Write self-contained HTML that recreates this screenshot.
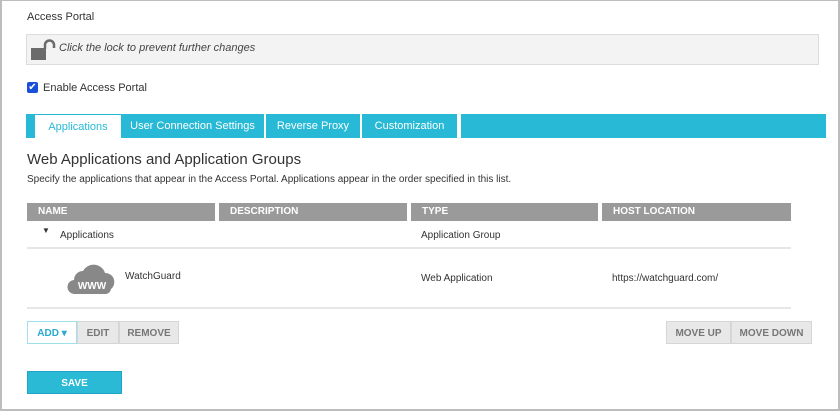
<!DOCTYPE html>
<html><head><style>
body{margin:0;width:840px;height:412px;font-family:"Liberation Sans",sans-serif;color:#333;background:#fff;position:relative;overflow:hidden}
.frame{position:absolute;left:0;top:0;width:836px;height:408px;border:2px solid #bdbdbd;border-top-width:1px}
.a{position:absolute}
.t{font-size:11px;white-space:nowrap}
.tab{position:absolute;top:114px;height:24px;line-height:24px;color:#fff;font-size:11px;text-align:center;border-right:2px solid #fff}
.th{position:absolute;top:203px;height:18px;line-height:18px;background:#9a9a9a;color:#fff;font-weight:bold;font-size:10px;padding-left:11px;box-sizing:border-box;border-right:2px solid #fff}
.btn{position:absolute;top:321px;height:23px;line-height:23px;font-size:10px;font-weight:bold;color:#777;background:#e8e8e8;border:1px solid #d6d6d6;box-sizing:border-box;text-align:center}
</style></head><body>
<div class="frame"></div>
<div class="a t" style="left:27px;top:11px">Access Portal</div>
<div class="a" style="left:26px;top:34px;width:793px;height:31px;background:#f3f3f3;border:1px solid #dcdcdc;box-sizing:border-box"></div>
<svg class="a" style="left:30px;top:39px" width="26" height="22" viewBox="0 0 26 22"><rect x="1" y="9" width="15" height="12" fill="#6b6b6b"/><path d="M15 10V6a4.5 4.5 0 0 1 9 0v3" fill="none" stroke="#6b6b6b" stroke-width="2.5"/></svg>
<div class="a t" style="left:59px;top:42px;font-style:italic;color:#444">Click the lock to prevent further changes</div>
<div class="a" style="left:27px;top:82px;width:11px;height:11px;background:#1a4fd8;border-radius:2px;color:#fff;font-size:10px;line-height:11px;text-align:center">✔</div>
<div class="a t" style="left:43px;top:82px">Enable Access Portal</div>
<div class="a" style="left:26px;top:114px;width:800px;height:24px;background:#27b9d5"></div>
<div class="a" style="left:35px;top:115px;width:86px;height:23px;background:#fff;color:#27b9d5;font-size:11px;line-height:24px;text-align:center">Applications</div>
<div class="tab" style="left:121px;width:143px">User Connection Settings</div>
<div class="tab" style="left:266px;width:94px">Reverse Proxy</div>
<div class="tab" style="left:362px;width:95px">Customization</div>
<div class="tab" style="left:459px;width:0;"></div>
<div class="a" style="left:27px;top:151px;font-size:15px;color:#333">Web Applications and Application Groups</div>
<div class="a" style="left:27px;top:174px;font-size:10px;color:#333">Specify the applications that appear in the Access Portal. Applications appear in the order specified in this list.</div>
<div class="th" style="left:27px;width:190px">NAME</div>
<div class="th" style="left:219px;width:190px">DESCRIPTION</div>
<div class="th" style="left:411px;width:189px">TYPE</div>
<div class="th" style="left:602px;width:189px;border-right:0">HOST LOCATION</div>
<div class="a" style="left:42px;top:226px;font-size:8px">▼</div>
<div class="a t" style="left:60px;top:230px;font-size:10px">Applications</div>
<div class="a t" style="left:421px;top:230px;font-size:10px">Application Group</div>
<div class="a" style="left:27px;top:247px;width:764px;height:2px;background:#e6e6e6"></div>
<svg class="a" style="left:67px;top:261px" width="52" height="34" viewBox="0 0 52 34"><path d="M8 33a7 7 0 0 1-1-14 9 9 0 0 1 9-9 12 12 0 0 1 22 2 9 9 0 0 1 6 16 6 6 0 0 1-5 5z" fill="#888"/><text x="25" y="28" fill="#fff" font-family="Liberation Sans" font-weight="bold" font-size="10" text-anchor="middle">WWW</text></svg>
<div class="a t" style="left:125px;top:271px;font-size:10px">WatchGuard</div>
<div class="a t" style="left:421px;top:273px;font-size:10px">Web Application</div>
<div class="a t" style="left:612px;top:273px;font-size:10px">https://watchguard.com/</div>
<div class="a" style="left:27px;top:307px;width:764px;height:2px;background:#e6e6e6"></div>
<div class="btn" style="left:27px;width:50px;background:#fff;border-color:#9fe0ec;color:#27a9d0">ADD ▾</div>
<div class="btn" style="left:77px;width:42px">EDIT</div>
<div class="btn" style="left:119px;width:60px">REMOVE</div>
<div class="btn" style="left:666px;width:65px">MOVE UP</div>
<div class="btn" style="left:731px;width:81px">MOVE DOWN</div>
<div class="a" style="left:27px;top:371px;width:95px;height:23px;line-height:23px;background:#2bbad6;border:1px solid #1fa6c4;box-sizing:border-box;color:#fff;font-size:10px;font-weight:bold;text-align:center">SAVE</div>
</body></html>
